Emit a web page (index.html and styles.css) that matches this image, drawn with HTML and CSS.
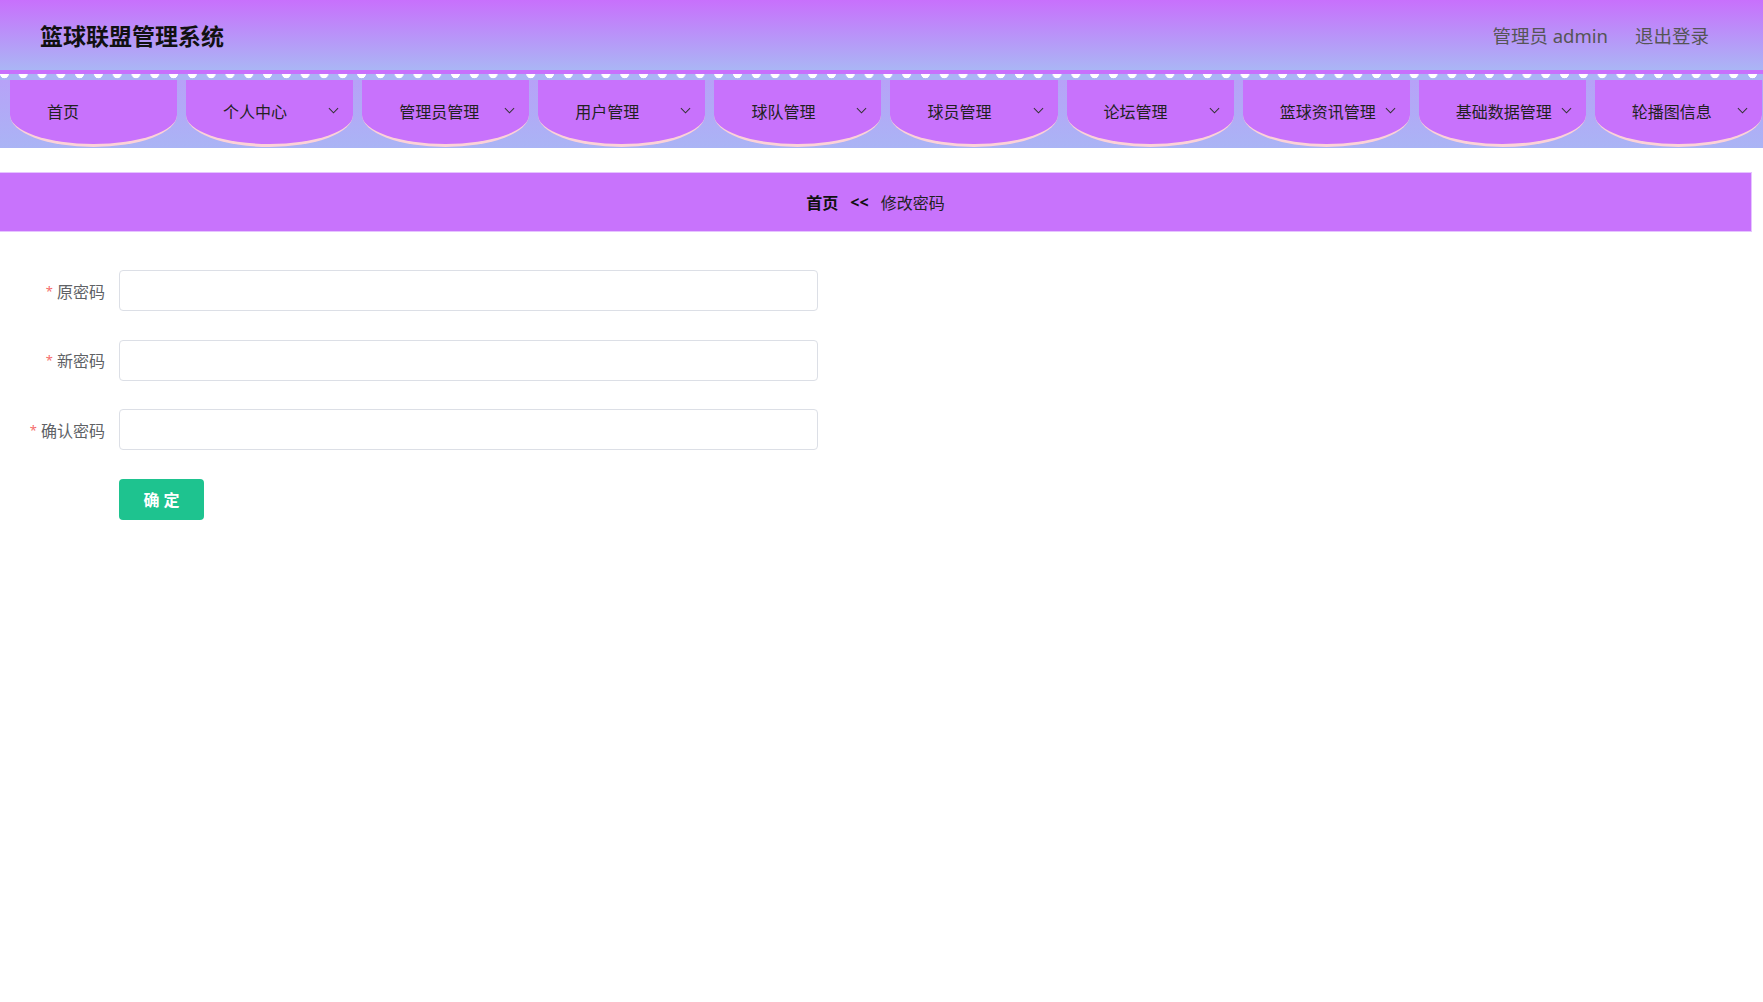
FILE: index.html
```html
<!DOCTYPE html>
<html lang="zh-CN">
<head>
    <meta charset="UTF-8">
    <meta name="viewport" content="width=device-width, initial-scale=1.0">
    <title>篮球联盟管理系统 - 修改密码</title>
    <link rel="stylesheet" href="styles.css">
</head>
<body>

    <header class="top-bar">
        <div class="brand">篮球联盟管理系统</div>
        <div class="user-box">
            <span class="user-name">管理员 admin</span>
            <span class="logout">退出登录</span>
        </div>
    </header>

    <div class="dots"></div>

    <nav class="menu">
        <div class="menu-item"><span>首页</span></div>
        <div class="menu-item"><span>个人中心</span><svg class="arrow" viewBox="0 0 12 7"><path d="M1 1l5 5 5-5"/></svg></div>
        <div class="menu-item"><span>管理员管理</span><svg class="arrow" viewBox="0 0 12 7"><path d="M1 1l5 5 5-5"/></svg></div>
        <div class="menu-item"><span>用户管理</span><svg class="arrow" viewBox="0 0 12 7"><path d="M1 1l5 5 5-5"/></svg></div>
        <div class="menu-item"><span>球队管理</span><svg class="arrow" viewBox="0 0 12 7"><path d="M1 1l5 5 5-5"/></svg></div>
        <div class="menu-item"><span>球员管理</span><svg class="arrow" viewBox="0 0 12 7"><path d="M1 1l5 5 5-5"/></svg></div>
        <div class="menu-item"><span>论坛管理</span><svg class="arrow" viewBox="0 0 12 7"><path d="M1 1l5 5 5-5"/></svg></div>
        <div class="menu-item"><span>篮球资讯管理</span><svg class="arrow" viewBox="0 0 12 7"><path d="M1 1l5 5 5-5"/></svg></div>
        <div class="menu-item"><span>基础数据管理</span><svg class="arrow" viewBox="0 0 12 7"><path d="M1 1l5 5 5-5"/></svg></div>
        <div class="menu-item"><span>轮播图信息</span><svg class="arrow" viewBox="0 0 12 7"><path d="M1 1l5 5 5-5"/></svg></div>
    </nav>

    <div class="crumbs">
        <b>首页</b>
        <b class="sep">&lt;&lt;</b>
        <span>修改密码</span>
    </div>

    <form class="pwd-form">
        <div class="form-row">
            <label class="form-label"><i>*</i>原密码</label>
            <input type="password" class="form-input">
        </div>
        <div class="form-row">
            <label class="form-label"><i>*</i>新密码</label>
            <input type="password" class="form-input">
        </div>
        <div class="form-row">
            <label class="form-label"><i>*</i>确认密码</label>
            <input type="password" class="form-input">
        </div>
        <div class="form-row">
            <span class="form-label"></span>
            <button type="button" class="btn-ok">确 定</button>
        </div>
    </form>

</body>
</html>
```

FILE: styles.css
```css
body { margin: 0; font-family: "Noto Sans", "Noto Sans CJK SC", sans-serif; background: #fff; }

.top-bar { height: 70px; display: flex; align-items: center; justify-content: space-between; padding: 0 54px 0 40px; background: linear-gradient(#c870fc, #aab6f5); }
.brand { font-size: 23px; font-weight: bold; color: #111; }
.user-box { display: flex; gap: 27px; font-size: 18.5px; color: #555; }

.dots { height: 6px; border-top: 4px solid #c870fc; background: radial-gradient(circle at 50% 0, #fff 4px, transparent 4.6px) -5px 0 / 18.8px 6px repeat-x, #aab4f5; }

.menu { display: flex; gap: 9px; padding: 0 1px 1px 10px; background: linear-gradient(#b7a2f8, #aab4f5); }
.menu-item { flex: 1; height: 67px; display: flex; align-items: center; justify-content: space-between; padding: 0 14px 3px 37px; box-sizing: border-box; background: #c872fc; border-bottom: 3px solid #fcd2d8; border-radius: 0 0 50% 50% / 0 0 32px 32px; font-size: 16px; color: #222; }
.arrow { width: 11px; height: 7px; fill: none; stroke: #333; stroke-width: 1.1; }

.crumbs { margin: 24px 11px 0 0; height: 58px; display: flex; align-items: center; justify-content: center; gap: 12px; background: #c873fc; border: 1px solid #e6c4ff; border-left: none; font-size: 16px; color: #222; }
.crumbs b { color: #111; }

.pwd-form { padding-top: 38px; }
.form-row { display: flex; align-items: center; margin-bottom: 28.5px; }
.form-label { width: 105px; margin-right: 14px; text-align: right; font-size: 16px; color: #606266; }
.form-label i { font-style: normal; font-size: 13px; vertical-align: 2px; color: #f56c6c; margin-right: 4px; }
.form-input { width: 699px; height: 41px; box-sizing: border-box; border: 1px solid #dcdfe6; border-radius: 4px; outline: none; padding: 0 14px; }
.btn-ok { width: 85px; height: 41px; border: none; border-radius: 4px; background: #1ec38f; color: #fff; font-size: 16px; font-weight: bold; font-family: inherit; }
```
